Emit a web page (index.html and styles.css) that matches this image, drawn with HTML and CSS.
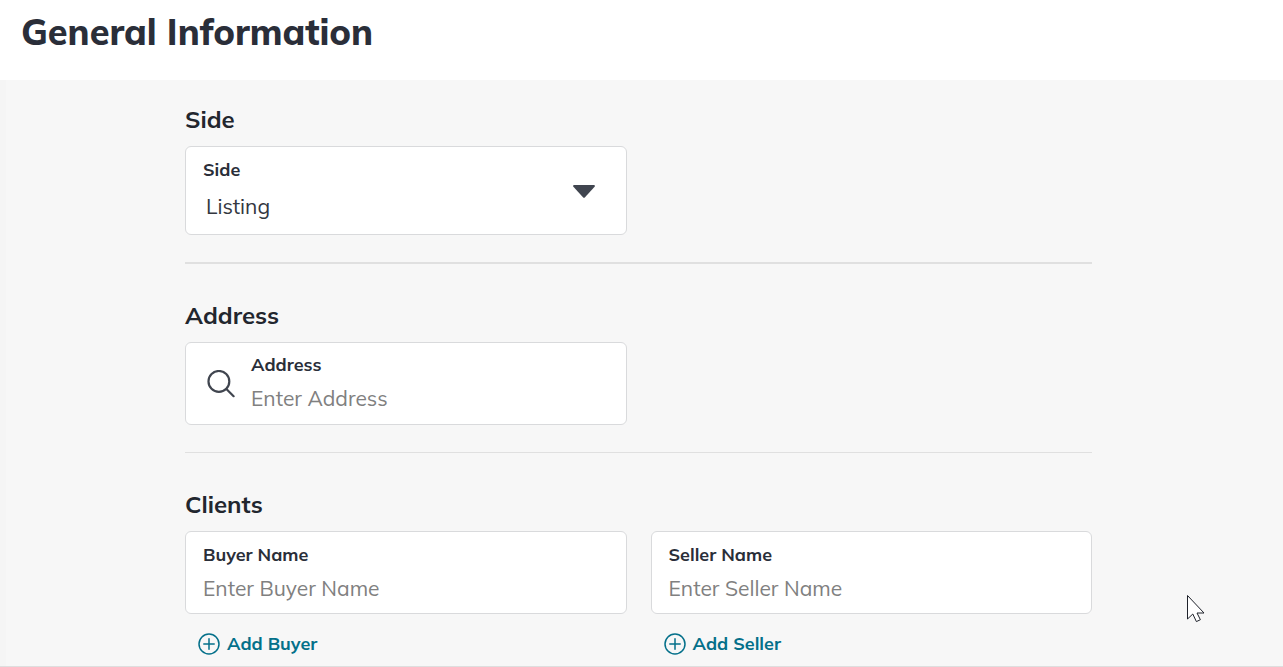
FILE: index.html
```html
<!DOCTYPE html>
<html lang="en">
<head>
    <meta charset="UTF-8">
    <meta name="viewport" content="width=device-width, initial-scale=1.0">
    <title>General Information</title>
    <link rel="stylesheet" href="styles.css">
</head>
<body>
    <header class="page-header">
        <h1>General Information</h1>
    </header>

    <form class="content">
        <!-- Side -->
        <section class="section section-thick">
            <h2>Side</h2>
            <div class="row">
                <div class="field">
                    <div class="field-text">
                        <label for="side">Side</label>
                        <select id="side">
                            <option>Listing</option>
                            <option>Buying</option>
                        </select>
                    </div>
                    <svg class="caret" width="22" height="13" viewBox="0 0 22 13" aria-hidden="true">
                        <path d="M0.8 0h20.4q1.2 0.6 0.4 1.8L11.8 12.4q-0.8 0.7-1.6 0L0.4 1.8Q-0.4 0.6 0.8 0z" fill="#40454f"/>
                    </svg>
                </div>
            </div>
        </section>

        <!-- Address -->
        <section class="section">
            <h2>Address</h2>
            <div class="row">
                <div class="field field-search">
                    <svg class="search-icon" width="28" height="28" viewBox="0 0 28 28" fill="none" stroke="#40454f" stroke-width="2.2" stroke-linecap="round" aria-hidden="true">
                        <circle cx="11.9" cy="11.4" r="10.4"/>
                        <path d="M19.4 19l7.2 7.2"/>
                    </svg>
                    <div class="field-text">
                        <label for="address">Address</label>
                        <input type="text" id="address" placeholder="Enter Address">
                    </div>
                </div>
            </div>
        </section>

        <!-- Clients -->
        <section class="section">
            <h2>Clients</h2>
            <div class="row">
                <div class="client">
                    <div class="field">
                        <div class="field-text">
                            <label for="buyer">Buyer Name</label>
                            <input type="text" id="buyer" placeholder="Enter Buyer Name">
                        </div>
                    </div>
                    <button type="button" class="add-btn">
                        <svg width="22" height="22" viewBox="0 0 22 22" fill="none" stroke="#04708a" stroke-width="1.5" stroke-linecap="round" aria-hidden="true">
                            <circle cx="11" cy="11" r="10"/>
                            <path d="M11 5.8v10.4M5.8 11h10.4"/>
                        </svg>
                        Add Buyer
                    </button>
                </div>
                <div class="client">
                    <div class="field">
                        <div class="field-text">
                            <label for="seller">Seller Name</label>
                            <input type="text" id="seller" placeholder="Enter Seller Name">
                        </div>
                    </div>
                    <button type="button" class="add-btn">
                        <svg width="22" height="22" viewBox="0 0 22 22" fill="none" stroke="#04708a" stroke-width="1.5" stroke-linecap="round" aria-hidden="true">
                            <circle cx="11" cy="11" r="10"/>
                            <path d="M11 5.8v10.4M5.8 11h10.4"/>
                        </svg>
                        Add Seller
                    </button>
                </div>
            </div>
        </section>
    </form>

    <!-- Mouse pointer -->
    <svg class="pointer" width="19" height="29" viewBox="0 0 19 29" aria-hidden="true">
        <path d="M0.5 0.5v23.5l5.3-5 3.6 7.6 4-1.9-3.4-6.7h7z" fill="#fff" stroke="#1f222b" stroke-width="1"/>
    </svg>
</body>
</html>
```
FILE: styles.css
```css
* {
    box-sizing: border-box;
}

body {
    margin: 0;
    position: relative;
    background-color: #fff;
    color: #2a2e39;
    font-family: 'Mulish', 'Noto Sans', sans-serif;
}

/* Page Header */
.page-header {
    padding: 8px 21px 24px;
}

h1 {
    margin: 0;
    font-size: 36px;
    line-height: 48px;
    font-weight: 800;
}

/* Form Area */
.content {
    padding: 23px 191px 8px 185px;
    background-color: #f7f7f7;
    border-bottom: 1px solid #dedede;
    box-shadow: inset 6px 0 #f5f5f5;
}

.section + .section {
    margin-top: 27px;
    padding-top: 35px;
    border-top: 1px solid #e0e0e0;
}

.section-thick + .section {
    border-top-width: 2px;
}

h2 {
    margin: 0 0 11px;
    font-size: 24px;
    line-height: 32px;
    font-weight: 700;
    color: #22262e;
}

.row {
    display: grid;
    grid-template-columns: 1fr 1fr;
    gap: 24px;
}

/* Field Box */
.field {
    display: flex;
    align-items: center;
    padding: 11px 16px 9px 17px;
    background-color: #fff;
    border: 1px solid #d9dadc;
    border-radius: 6px;
}

.field-search {
    padding: 10px 16px 10px 21px;
}

.field-text {
    display: flex;
    flex-direction: column;
    flex: 1;
    gap: 5px;
    min-width: 0;
}

label {
    font-size: 18px;
    line-height: 24px;
    font-weight: 700;
}

input,
select {
    width: 100%;
    height: 32px;
    padding: 0;
    border: none;
    outline: none;
    background: transparent;
    color: #33373f;
    font-family: inherit;
    font-size: 21px;
    font-weight: 400;
}

input::placeholder {
    color: #808080;
    opacity: 1;
}

select {
    height: 38px;
    padding-left: 3px;
    appearance: none;
}

.caret {
    margin-right: 15px;
}

.search-icon {
    margin-right: 16px;
}

/* Add Buttons */
.add-btn {
    display: flex;
    align-items: center;
    gap: 7px;
    margin: 16px 0 0 13px;
    padding: 0;
    border: none;
    background: transparent;
    color: #04708a;
    font-family: inherit;
    font-size: 18px;
    line-height: 28px;
    font-weight: 700;
    cursor: pointer;
}

.pointer {
    position: absolute;
    left: 1187px;
    top: 595px;
    pointer-events: none;
}
```
